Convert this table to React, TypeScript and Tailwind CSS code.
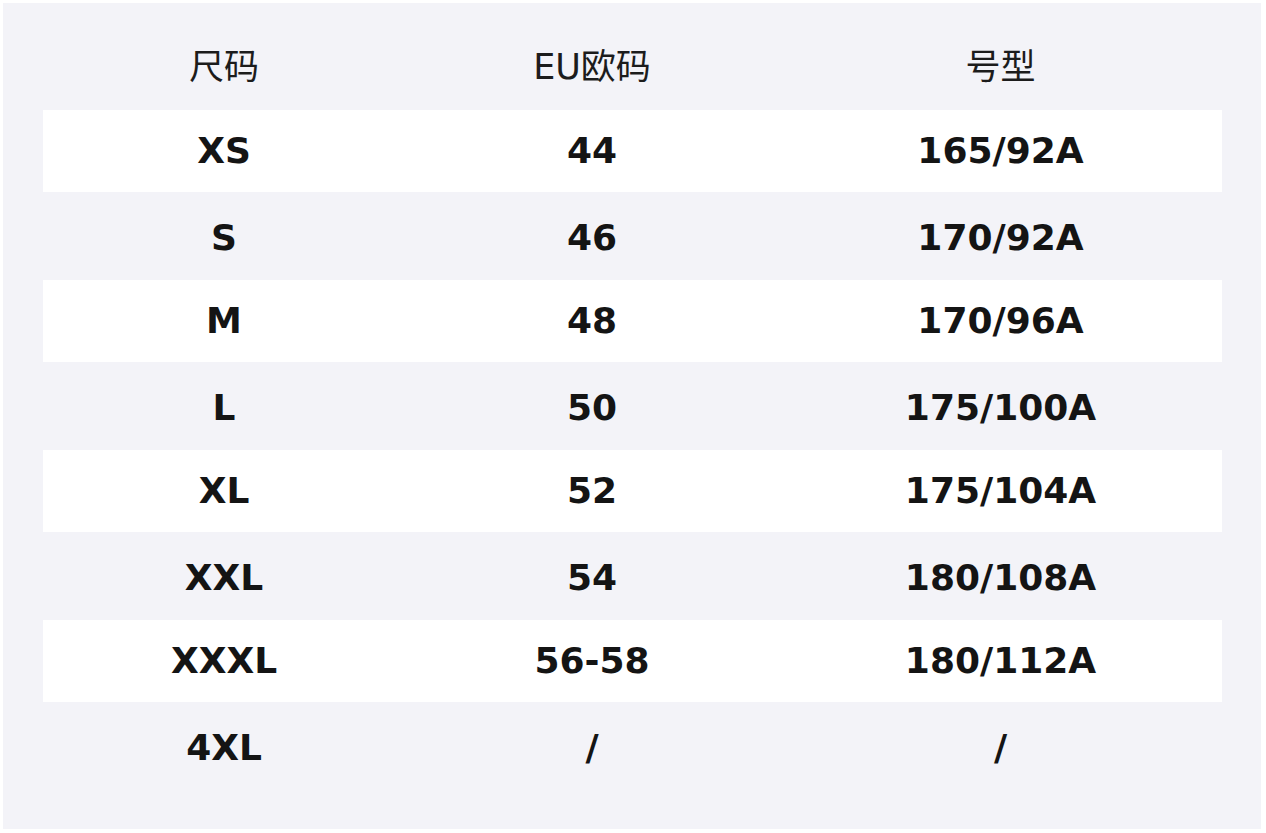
const rows: [string, string, string][] = [
  ["XS", "44", "165/92A"],
  ["S", "46", "170/92A"],
  ["M", "48", "170/96A"],
  ["L", "50", "175/100A"],
  ["XL", "52", "175/104A"],
  ["XXL", "54", "180/108A"],
  ["XXXL", "56-58", "180/112A"],
  ["4XL", "/", "/"],
];

const cols = "grid grid-cols-[362px_374px_443px] items-center text-center";

export default function App() {
  return (
    <div
      className="w-[1266px] h-[833px] bg-white p-[3px]"
      style={{ fontFamily: '"DejaVu Sans", "Noto Sans CJK SC", sans-serif' }}
    >
      <div className="h-[826px] w-[1258px] bg-[#f3f3f8] pt-[22px] pl-[40px] pr-[39px]">
        <div className={`${cols} h-[85px] text-[35px] text-[#1c1c1c]`}>
          <span>尺码</span>
          <span>EU欧码</span>
          <span>号型</span>
        </div>
        {rows.map((r, i) => (
          <div
            key={r[0]}
            className={`${cols} h-[85px] text-[36px] font-bold text-[#141414] ${
              i % 2 === 0 ? "bg-white bg-clip-padding border-b-[3px] border-transparent" : ""
            }`}
          >
            <span>{r[0]}</span>
            <span>{r[1]}</span>
            <span>{r[2]}</span>
          </div>
        ))}
      </div>
    </div>
  );
}
